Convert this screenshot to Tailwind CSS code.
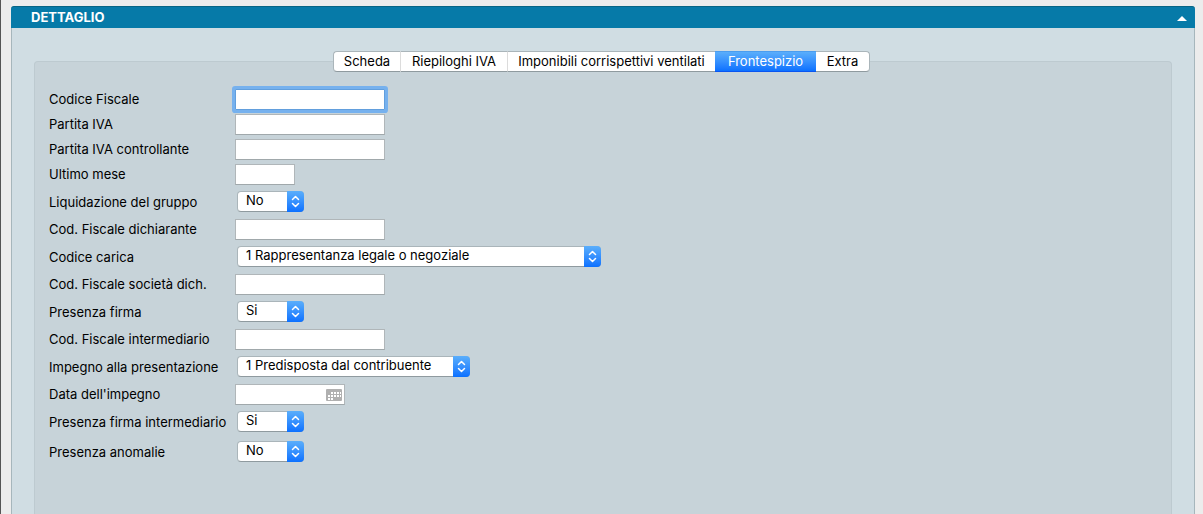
<!DOCTYPE html>
<html lang="it">
<head>
    <meta charset="UTF-8">
    <meta name="viewport" content="width=device-width, initial-scale=1.0">
    <title>Dettaglio</title>
    <script src="https://cdn.jsdelivr.net/npm/@tailwindcss/browser@4"></script>
</head>
<body class="bg-[#ececec] font-['Inter','Liberation_Sans',sans-serif] text-[13px] text-black">
<!-- frecce usate da tutti i menu a tendina -->
<svg class="hidden">
    <symbol id="arrows" viewBox="0 0 17 21">
        <path d="M5.5 8.5 8.5 5.5 11.5 8.5M5.5 12.5 8.5 15.5 11.5 12.5" fill="none" stroke="#fff" stroke-width="1.5" stroke-linecap="round" stroke-linejoin="round"/>
    </symbol>
</svg>

<div class="min-h-screen flex flex-col border-l border-[#555] pl-[10px] pr-2 pt-[6px]">
    <section class="flex-1 flex flex-col">
        <header class="flex justify-between items-center h-[22px] pl-5 pr-2 rounded-t-[3px] bg-[#067aa8] border-t border-[#066585] text-white">
            <h1 class="pb-px font-bold leading-5">DETTAGLIO</h1>
            <button type="button" aria-label="Chiudi dettaglio" class="pt-[2px]">
                <svg class="block w-[10px] h-[5px]" viewBox="0 0 10 5"><path d="M5 0 10 5H0z" fill="#fff"/></svg>
            </button>
        </header>

        <div class="flex-1 flex flex-col px-[22px] pt-[33px] bg-[#d0dde3] border-x border-[#a6b6bc]">
            <div class="flex-1 px-[14px] pb-8 rounded-t-[4px] bg-[#c7d3d9] border border-b-0 border-[#bdcad0]">
                <!-- schede -->
                <nav class="flex justify-center -mt-[11px] pr-[3px]">
                    <div class="flex h-[21px] leading-[19px]">
                        <button type="button" class="w-[68px] bg-white rounded-l-[4px] border border-[#aab5ba] border-b-[#8f9a9f] border-r-[#dcdcdc]">Scheda</button>
                        <button type="button" class="w-[107px] bg-white border-y border-r border-t-[#aab5ba] border-b-[#8f9a9f] border-r-[#dcdcdc]">Riepiloghi IVA</button>
                        <button type="button" class="w-[207px] bg-white border-y border-t-[#aab5ba] border-b-[#8f9a9f] whitespace-nowrap">Imponibili corrispettivi ventilati</button>
                        <button type="button" class="w-[101px] bg-linear-to-b from-[#5aaefb] to-[#0a70ff] border-y border-t-[#4a9df0] border-b-[#0a55f0] text-white">Frontespizio</button>
                        <button type="button" class="w-[54px] bg-white rounded-r-[4px] border border-l-0 border-[#aab5ba] border-b-[#8f9a9f]">Extra</button>
                    </div>
                </nav>

                <!-- dati del frontespizio -->
                <form class="pt-[17px] leading-[21px]">
                    <div class="flex items-start h-[25px]">
                        <label for="codiceFiscale" class="w-[186px]">Codice Fiscale</label>
                        <input id="codiceFiscale" type="text" class="w-[150px] h-[21px] px-1 bg-white border border-[#629fdd] ring-3 ring-[#76b1ee] rounded-[1px] outline-none">
                    </div>
                    <div class="flex items-start h-[25px]">
                        <label for="partitaIva" class="w-[186px]">Partita IVA</label>
                        <input id="partitaIva" type="text" class="w-[150px] h-[21px] px-1 bg-white border border-[#b0b6b9] border-b-[#a0a8ab]">
                    </div>
                    <div class="flex items-start h-[25px]">
                        <label for="ivaControllante" class="w-[186px]">Partita IVA controllante</label>
                        <input id="ivaControllante" type="text" class="w-[150px] h-[21px] px-1 bg-white border border-[#b0b6b9] border-b-[#a0a8ab]">
                    </div>
                    <div class="flex items-start h-[25px]">
                        <label for="ultimoMese" class="w-[186px]">Ultimo mese</label>
                        <input id="ultimoMese" type="text" class="w-[60px] h-[21px] px-1 bg-white border border-[#b0b6b9] border-b-[#a0a8ab]">
                    </div>
                    <div class="flex items-start h-[30px] pt-[2px]">
                        <label for="liquidazione" class="w-[188px] pt-px">Liquidazione del gruppo</label>
                        <div class="relative w-[67px] h-[21px]">
                            <select id="liquidazione" class="block appearance-none w-full h-[21px] pl-2 pr-5 pb-[2px] rounded-[4px] bg-white border border-[#aab5ba] border-b-[#8f9a9f] leading-[17px]"><option>No</option><option>Si</option></select>
                            <svg class="absolute right-0 top-0 w-[17px] h-[21px] rounded-r-[4px] bg-linear-to-b from-[#5aaefb] to-[#0a70ff] pointer-events-none"><use href="#arrows"/></svg>
                        </div>
                    </div>
                    <div class="flex items-start h-[25px]">
                        <label for="cfDichiarante" class="w-[186px]">Cod. Fiscale dichiarante</label>
                        <input id="cfDichiarante" type="text" class="w-[150px] h-[21px] px-1 bg-white border border-[#b0b6b9] border-b-[#a0a8ab]">
                    </div>
                    <div class="flex items-start h-[30px] pt-[2px]">
                        <label for="codiceCarica" class="w-[188px] pt-px">Codice carica</label>
                        <div class="relative w-[364px] h-[21px]">
                            <select id="codiceCarica" class="block appearance-none w-full h-[21px] pl-2 pr-5 pb-[2px] rounded-[4px] bg-white border border-[#aab5ba] border-b-[#8f9a9f] leading-[17px]"><option>1 Rappresentanza legale o negoziale</option></select>
                            <svg class="absolute right-0 top-0 w-[17px] h-[21px] rounded-r-[4px] bg-linear-to-b from-[#5aaefb] to-[#0a70ff] pointer-events-none"><use href="#arrows"/></svg>
                        </div>
                    </div>
                    <div class="flex items-start h-[25px]">
                        <label for="cfSocieta" class="w-[186px]">Cod. Fiscale società dich.</label>
                        <input id="cfSocieta" type="text" class="w-[150px] h-[21px] px-1 bg-white border border-[#b0b6b9] border-b-[#a0a8ab]">
                    </div>
                    <div class="flex items-start h-[30px] pt-[2px]">
                        <label for="firma" class="w-[188px] pt-px">Presenza firma</label>
                        <div class="relative w-[67px] h-[21px]">
                            <select id="firma" class="block appearance-none w-full h-[21px] pl-2 pr-5 pb-[2px] rounded-[4px] bg-white border border-[#aab5ba] border-b-[#8f9a9f] leading-[17px]"><option>Si</option><option>No</option></select>
                            <svg class="absolute right-0 top-0 w-[17px] h-[21px] rounded-r-[4px] bg-linear-to-b from-[#5aaefb] to-[#0a70ff] pointer-events-none"><use href="#arrows"/></svg>
                        </div>
                    </div>
                    <div class="flex items-start h-[25px]">
                        <label for="cfIntermediario" class="w-[186px]">Cod. Fiscale intermediario</label>
                        <input id="cfIntermediario" type="text" class="w-[150px] h-[21px] px-1 bg-white border border-[#b0b6b9] border-b-[#a0a8ab]">
                    </div>
                    <div class="flex items-start h-[30px] pt-[2px]">
                        <label for="impegno" class="w-[188px] pt-px">Impegno alla presentazione</label>
                        <div class="relative w-[233px] h-[21px]">
                            <select id="impegno" class="block appearance-none w-full h-[21px] pl-2 pr-5 pb-[2px] rounded-[4px] bg-white border border-[#aab5ba] border-b-[#8f9a9f] leading-[17px]"><option>1 Predisposta dal contribuente</option></select>
                            <svg class="absolute right-0 top-0 w-[17px] h-[21px] rounded-r-[4px] bg-linear-to-b from-[#5aaefb] to-[#0a70ff] pointer-events-none"><use href="#arrows"/></svg>
                        </div>
                    </div>
                    <div class="flex items-start h-[25px]">
                        <label for="dataImpegno" class="w-[186px]">Data dell'impegno</label>
                        <div class="flex items-center w-[110px] h-[21px] pr-[2px] bg-white border border-[#b0b6b9] border-b-[#a0a8ab]">
                            <input id="dataImpegno" type="text" class="flex-1 min-w-0 h-full px-1 outline-none">
                            <button type="button" aria-label="Calendario">
                                <svg class="block w-4 h-3" viewBox="0 0 16 12">
                                    <rect width="16" height="12" rx="1" fill="#b0b0b0"/>
                                    <path d="M5 3h2v2H5zM8 3h2v2H8zM11 3h2v2h-2zM14 3h1v2h-1zM2 6h2v2H2zM5 6h2v2H5zM8 6h2v2H8zM11 6h2v2h-2zM14 6h1v2h-1zM2 9h2v2H2zM5 9h2v2H5z" fill="#fff"/>
                                </svg>
                            </button>
                        </div>
                    </div>
                    <div class="flex items-start h-[30px] pt-[2px]">
                        <label for="firmaIntermediario" class="w-[188px] pt-px">Presenza firma intermediario</label>
                        <div class="relative w-[67px] h-[21px]">
                            <select id="firmaIntermediario" class="block appearance-none w-full h-[21px] pl-2 pr-5 pb-[2px] rounded-[4px] bg-white border border-[#aab5ba] border-b-[#8f9a9f] leading-[17px]"><option>Si</option><option>No</option></select>
                            <svg class="absolute right-0 top-0 w-[17px] h-[21px] rounded-r-[4px] bg-linear-to-b from-[#5aaefb] to-[#0a70ff] pointer-events-none"><use href="#arrows"/></svg>
                        </div>
                    </div>
                    <div class="flex items-start h-[30px] pt-[2px]">
                        <label for="anomalie" class="w-[188px] pt-px">Presenza anomalie</label>
                        <div class="relative w-[67px] h-[21px]">
                            <select id="anomalie" class="block appearance-none w-full h-[21px] pl-2 pr-5 pb-[2px] rounded-[4px] bg-white border border-[#aab5ba] border-b-[#8f9a9f] leading-[17px]"><option>No</option><option>Si</option></select>
                            <svg class="absolute right-0 top-0 w-[17px] h-[21px] rounded-r-[4px] bg-linear-to-b from-[#5aaefb] to-[#0a70ff] pointer-events-none"><use href="#arrows"/></svg>
                        </div>
                    </div>
                </form>
            </div>
        </div>
    </section>
</div>
</body>
</html>
